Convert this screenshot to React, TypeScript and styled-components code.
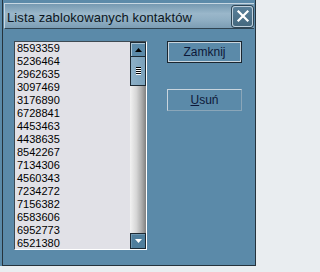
import React from 'react';
import styled, { createGlobalStyle } from 'styled-components';

const GlobalStyle = createGlobalStyle`
  html, body {
    margin: 0;
    padding: 0;
    background: #e9edf0;
  }
  body {
    font-family: 'Liberation Sans', Arial, sans-serif;
  }
`;

const blocked = [
  '8593359', '5236464', '2962635', '3097469', '3176890', '6728841',
  '4453463', '4438635', '8542267', '7134306', '4560343', '7234272',
  '7156382', '6583606', '6952773', '6521380',
];

const Outer = styled.div`
  width: 256px;
  height: 266px;
  padding-left: 2px;
  box-sizing: border-box;
  background: #5b8aa9;
`;

const Frame = styled.div`
  height: 100%;
  box-sizing: border-box;
  border-left: 1px solid #25333c;
  border-right: 1px solid #25333c;
  border-bottom: 1px solid #25333c;
  display: flex;
  flex-direction: column;
`;

const TitleBar = styled.div`
  margin: 3px 1px 0 1px;
  height: 26px;
  box-sizing: border-box;
  display: flex;
  align-items: center;
  justify-content: space-between;
  padding: 0 1px 0 2px;
  border-top: 1px solid #c6d7e2;
  border-left: 1px solid #c6d7e2;
  border-bottom: 1px solid #2f4452;
  background: linear-gradient(to bottom, #7599b1 0%, #9ab7ca 40%, #8eadc2 70%, #7c9db4 100%);
`;

const Title = styled.span`
  font-size: 13px;
  color: #0c1620;
  padding-top: 2px;
  letter-spacing: 0.1px;
`;

const CloseButton = styled.div`
  width: 21px;
  height: 21px;
  box-sizing: border-box;
  border: 1px solid #bfd0dc;
  border-radius: 3px;
  background: linear-gradient(to bottom, #587f99, #45697f);
  display: flex;
  align-items: center;
  justify-content: center;
  box-shadow: 0 0 0 1px #2e4656;
`;

const Body = styled.div`
  flex: 1;
  display: flex;
  padding: 12px 0 0 11px;
`;

const ListBox = styled.div`
  width: 133px;
  height: 209px;
  box-sizing: border-box;
  border-top: 1px solid #3e4a53;
  border-left: 1px solid #3e4a53;
  border-right: 1px solid #ffffff;
  border-bottom: 1px solid #ffffff;
  background: #e1e1e7;
  display: flex;
`;

const Items = styled.div`
  flex: 1;
  padding: 0 0 0 2px;
  overflow: hidden;
`;

const Item = styled.div`
  font-size: 11px;
  line-height: 13px;
  height: 13px;
  color: #000;
`;

const ScrollBar = styled.div`
  width: 16px;
  display: flex;
  flex-direction: column;
`;

const ArrowButton = styled.div<{ $dark?: boolean; $h: number }>`
  height: ${p => p.$h}px;
  box-sizing: border-box;
  border: 1px solid #1d2a33;
  box-shadow: inset 1px 1px 0 ${p => (p.$dark ? '#6f97b1' : '#a9c4d5')};
  background: ${p => (p.$dark ? '#4f7e9c' : '#5b8aa9')};
  display: flex;
  align-items: center;
  justify-content: center;
`;

const Thumb = styled.div`
  height: 29px;
  box-sizing: border-box;
  border: 1px solid #1d2a33;
  border-top: none;
  background: linear-gradient(to right, #8db0c7, #7aa1bb);
  display: flex;
  align-items: center;
  justify-content: center;
`;

const Grip = styled.div`
  width: 5px;
  height: 8px;
  background: repeating-linear-gradient(to bottom, #000 0, #000 1px, #fff 1px, #fff 2px);
`;

const Track = styled.div`
  flex: 1;
  background: linear-gradient(to right, #f2f2f2 0%, #d6d6d6 40%, #a9a9a9 75%, #7f7f7f 100%);
`;

const Buttons = styled.div`
  margin-left: 20px;
  display: flex;
  flex-direction: column;
  gap: 26px;
`;

const Button = styled.div<{ $default?: boolean }>`
  width: 75px;
  height: 22px;
  box-sizing: border-box;
  display: flex;
  align-items: center;
  justify-content: center;
  font-size: 12px;
  color: #0d1838;
  background: #5b8aa9;
  border: 1px solid ${p => (p.$default ? '#1a2630' : '#c9d5de')};
  border-right-color: ${p => (p.$default ? '#1a2630' : '#8aa6b9')};
  border-bottom-color: ${p => (p.$default ? '#1a2630' : '#8aa6b9')};
  box-shadow: ${p =>
    p.$default ? 'inset 1px 1px 0 #c9d5de, inset -1px -1px 0 #c9d5de' : 'none'};
`;

const Mnemonic = styled.span`
  text-decoration: underline;
`;

const App: React.FC = () => {
  return (
    <>
      <GlobalStyle />
      <Outer>
        <Frame>
          <TitleBar>
            <Title>Lista zablokowanych kontaktów</Title>
            <CloseButton>
              <svg width="14" height="14" viewBox="0 0 14 14">
                <path d="M2.5 2.5 L11.5 11.5 M11.5 2.5 L2.5 11.5" stroke="#fff" strokeWidth="2.2" strokeLinecap="square" />
              </svg>
            </CloseButton>
          </TitleBar>
          <Body>
            <ListBox>
              <Items>
                {blocked.map(n => (
                  <Item key={n}>{n}</Item>
                ))}
              </Items>
              <ScrollBar>
                <ArrowButton $h={15}>
                  <svg width="7" height="4" viewBox="0 0 7 4">
                    <path d="M0 4 L3.5 0 L7 4 Z" fill="#000" />
                  </svg>
                </ArrowButton>
                <Thumb>
                  <Grip />
                </Thumb>
                <Track />
                <ArrowButton $h={16} $dark>
                  <svg width="7" height="4" viewBox="0 0 7 4">
                    <path d="M0 0 L7 0 L3.5 4 Z" fill="#fff" />
                  </svg>
                </ArrowButton>
              </ScrollBar>
            </ListBox>
            <Buttons>
              <Button $default>Zamknij</Button>
              <Button>
                <Mnemonic>U</Mnemonic>suń
              </Button>
            </Buttons>
          </Body>
        </Frame>
      </Outer>
    </>
  );
};

export default App;
